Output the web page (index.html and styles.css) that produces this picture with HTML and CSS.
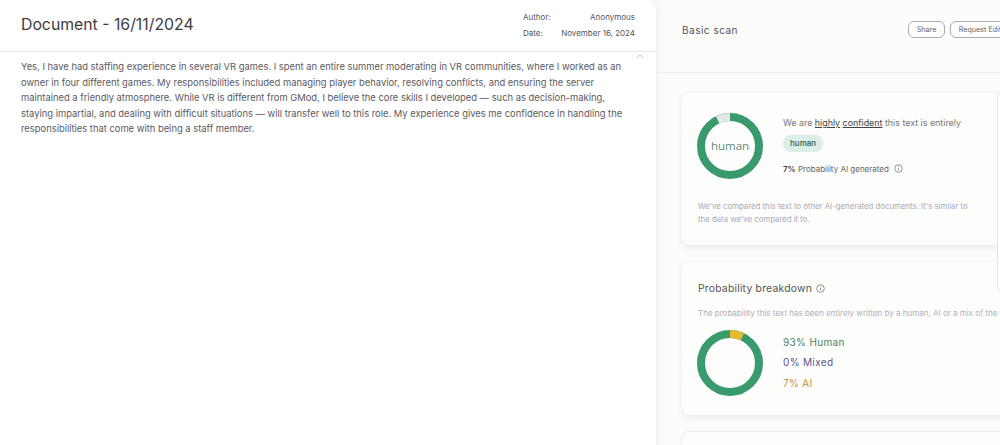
FILE: index.html
```html
<!DOCTYPE html>
<html lang="en">
<head>
  <meta charset="UTF-8" />
  <meta name="viewport" content="width=device-width, initial-scale=1.0"/>
  <title>Basic scan</title>
  <link rel="stylesheet" href="styles.css">
</head>
<body>
  <div class="page">
    <!-- Document -->
    <div class="doc">
      <div class="doc-header">
        <h1>Document - 16/11/2024</h1>
        <div class="doc-meta">
          <div class="meta-row"><span>Author:</span><span>Anonymous</span></div>
          <div class="meta-row"><span>Date:</span><span>November 16, 2024</span></div>
        </div>
      </div>
      <div class="doc-body">
        <svg class="scroll-up" width="8" height="5" viewBox="0 0 8 5"><path d="M1 4l3-3 3 3" fill="none" stroke="#c4c4c4" stroke-width="1"/></svg>
        <p>Yes, I have had staffing experience in several VR games. I spent an entire summer moderating in VR communities, where I worked as an owner in four different games. My responsibilities included managing player behavior, resolving conflicts, and ensuring the server maintained a friendly atmosphere. While VR is different from GMod, I believe the core skills I developed — such as decision-making, staying impartial, and dealing with difficult situations — will transfer well to this role. My experience gives me confidence in handling the responsibilities that come with being a staff member.</p>
      </div>
    </div>

    <!-- Scan -->
    <div class="scan">
      <div class="scan-header">
        <h2>Basic scan</h2>
        <div class="scan-actions">
          <button class="pill-btn">Share</button>
          <button class="pill-btn pill-wide">Request Edit</button>
        </div>
      </div>
      <div class="scan-cards">
        <div class="card card-result">
          <div class="result-top">
            <div class="donut">
              <svg width="66" height="66" viewBox="0 0 66 66">
                <circle cx="33" cy="33" r="29" fill="none" stroke="#399a6e" stroke-width="8"/>
                <circle cx="33" cy="33" r="29" fill="none" stroke="#e6e6e4" stroke-width="8" pathLength="100" stroke-dasharray="7 93" transform="rotate(-115.2 33 33)"/>
              </svg>
              <span class="donut-label">human</span>
            </div>
            <div class="result-info">
              <div class="result-line">We are <b>highly</b> <b>confident</b> this text is entirely</div>
              <span class="badge">human</span>
              <div class="result-prob"><b>7%</b> Probability AI generated
                <svg class="info" width="9" height="9" viewBox="0 0 9 9"><circle cx="4.5" cy="4.5" r="3.8" fill="none" stroke="#777" stroke-width=".8"/><path d="M4.5 4v2.4M4.5 2.4v.8" stroke="#777" stroke-width=".8"/></svg>
              </div>
            </div>
          </div>
          <p class="card-note">We've compared this text to other AI-generated documents. It's similar to the data we've compared it to.</p>
        </div>

        <div class="card card-breakdown">
          <h3>Probability breakdown
            <svg class="info info-title" width="9" height="9" viewBox="0 0 9 9"><circle cx="4.5" cy="4.5" r="3.8" fill="none" stroke="#777" stroke-width=".8"/><path d="M4.5 4v2.4M4.5 2.4v.8" stroke="#777" stroke-width=".8"/></svg>
          </h3>
          <p class="breakdown-sub">The probability this text has been entirely written by a human, AI or a mix of the two</p>
          <div class="breakdown-row">
            <svg width="66" height="66" viewBox="0 0 66 66">
              <circle cx="33" cy="33" r="29" fill="none" stroke="#399a6e" stroke-width="8"/>
              <circle cx="33" cy="33" r="29" fill="none" stroke="#e8b92e" stroke-width="8" pathLength="100" stroke-dasharray="7 93" transform="rotate(-90 33 33)"/>
            </svg>
            <ul class="legend">
              <li class="human">93% Human</li>
              <li class="mixed">0% Mixed</li>
              <li class="ai">7% AI</li>
            </ul>
          </div>
        </div>

        <div class="card card-next"></div>
      </div>
      <div class="side-panel"></div>
    </div>
  </div>
</body>
</html>
```

FILE: styles.css
```css
html, body {
  margin: 0;
  height: 100%;
  overflow: hidden;
}

body {
  font-family: Inter, 'Noto Sans', sans-serif;
  background: #fcfcfb;
  color: #444;
}

.page {
  display: flex;
  width: 1000px;
  height: 445px;
  overflow: hidden;
}

.doc {
  width: 656px;
  flex-shrink: 0;
  height: 460px;
  background: #fff;
  border-radius: 0 12px 0 0;
  box-shadow: 0 0 12px rgba(0, 0, 0, 0.07);
  position: relative;
  z-index: 1;
}

.doc-header {
  height: 52px;
  box-sizing: border-box;
  border-bottom: 1px solid #e8e8e8;
  padding: 0 21px;
  display: flex;
  justify-content: space-between;
}

.doc-header h1 {
  margin: 15px 0 0;
  font-size: 15.8px;
  line-height: 20px;
  font-weight: 400;
  color: #3d3d3d;
}

.doc-meta {
  width: 112px;
  padding-top: 10px;
}

.meta-row {
  display: flex;
  justify-content: space-between;
  font-size: 8px;
  line-height: 15.5px;
  color: #55555f;
}

.doc-body {
  position: relative;
  padding: 7px 21px 0;
}

.doc-body p {
  margin: 0;
  width: 612px;
  font-size: 9.4px;
  line-height: 15.5px;
  color: #5a5a62;
}

.scroll-up {
  position: absolute;
  top: 2px;
  right: 12px;
}

.scan {
  flex: 1;
  position: relative;
  min-width: 0;
}

.scan-header {
  height: 73px;
  box-sizing: border-box;
  border-bottom: 1px solid #efefef;
  padding: 21px 0 0 26px;
  display: flex;
  justify-content: space-between;
}

.scan-header h2 {
  margin: 0;
  font-size: 10px;
  line-height: 19px;
  font-weight: 400;
  letter-spacing: 0.5px;
  color: #55555a;
}

.scan-actions {
  display: flex;
  gap: 5px;
  flex-shrink: 0;
  margin-right: -10px;
}

.pill-btn {
  width: 37px;
  height: 17px;
  padding: 0;
  background: #fdfdfc;
  border: 1px solid #aaa;
  border-radius: 6px;
  font-family: inherit;
  font-size: 7.2px;
  color: #666;
}

.pill-wide {
  width: 60px;
}

.scan-cards {
  padding: 20px 0 0 26px;
  display: flex;
  flex-direction: column;
  gap: 17px;
}

.card {
  width: 340px;
  box-sizing: border-box;
  background: #fdfdfc;
  border-radius: 8px;
  box-shadow: 0 2px 6px rgba(0, 0, 0, 0.09);
  padding: 0 16px;
}

.card-result {
  height: 152px;
  padding-top: 20px;
}

.result-top {
  display: flex;
  gap: 20px;
  margin-left: -1px;
}

.donut {
  position: relative;
  width: 66px;
  height: 66px;
}

.donut-label {
  position: absolute;
  inset: 0 0 1px;
  display: flex;
  align-items: center;
  justify-content: center;
  font-family: 'Open Sans', sans-serif;
  font-size: 11.5px;
  color: #5f8a78;
}

.result-info {
  padding-top: 3px;
}

.result-line {
  font-size: 8.9px;
  line-height: 13px;
  color: #777;
}

.result-line b {
  font-weight: 400;
  color: #444;
  text-decoration: underline;
}

.badge {
  display: inline-block;
  margin-top: 6px;
  padding: 0 7px;
  font-size: 8px;
  font-weight: 500;
  line-height: 17px;
  background: #dcefe7;
  color: #33564a;
  border-radius: 8px;
}

.result-prob {
  margin-top: 11px;
  font-size: 8px;
  line-height: 12px;
  color: #666;
}

.result-prob b {
  font-weight: 600;
  color: #444;
}

.info {
  margin-left: 3px;
  vertical-align: -1px;
}

.info-title {
  margin-left: 1px;
}

.card-note {
  margin: 21px 0 0;
  width: 278px;
  font-size: 7.8px;
  line-height: 13px;
  color: #aaaab8;
}

.card-breakdown {
  height: 153px;
  padding-top: 20px;
}

.card-breakdown h3 {
  margin: 0;
  font-size: 10.4px;
  line-height: 14px;
  font-weight: 400;
  letter-spacing: 0.2px;
  color: #555;
}

.breakdown-sub {
  margin: 12px 0 0;
  font-size: 8px;
  line-height: 10px;
  white-space: nowrap;
  color: #b0b0c0;
}

.breakdown-row {
  display: flex;
  gap: 20px;
  margin-top: 12px;
  margin-left: -1px;
}

.legend {
  list-style: none;
  margin: 0;
  padding: 1.5px 0 0;
  font-size: 10px;
  line-height: 20.5px;
  letter-spacing: 0.35px;
}

.human { color: #4c7d68; }
.mixed { color: #5c5491; }
.ai { color: #b8973f; }

.card-next {
  height: 40px;
  box-shadow: 0 0 3px rgba(60, 60, 120, 0.15);
}

.side-panel {
  position: absolute;
  top: 90px;
  left: 341px;
  width: 40px;
  height: 200px;
  background: #fff;
  border: 1px solid #e6e6e6;
  border-radius: 6px;
}
```
